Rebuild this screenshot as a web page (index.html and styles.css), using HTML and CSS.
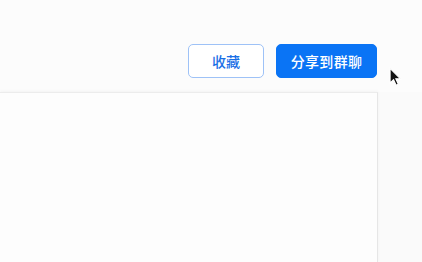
FILE: index.html
```html
<!DOCTYPE html>
<html lang="zh">
<head>
<meta charset="utf-8">
<link rel="stylesheet" href="styles.css">
</head>
<body>
<div class="page">
  <div class="toolbar">
    <button class="btn btn-outline">收藏</button>
    <button class="btn btn-primary">分享到群聊</button>
  </div>
  <div class="card"></div>
  <svg class="cursor" width="13" height="20" viewBox="0 0 12 18">
    <path d="M1 1 L1 14.5 L4.2 11.5 L6.6 16.6 L8.6 15.7 L6.3 10.7 L10.6 10.7 Z" fill="#111" stroke="#fff" stroke-width="1"/>
  </svg>
</div>
</body>
</html>
```

FILE: styles.css
```css
html, body {
  margin: 0;
  padding: 0;
  background: #fafafa;
  font-family: "Noto Sans CJK SC", "Noto Sans", sans-serif;
}
.page {
  position: relative;
  width: 422px;
  height: 262px;
  overflow: hidden;
  display: flex;
  flex-direction: column;
}
.toolbar {
  display: flex;
  justify-content: flex-end;
  gap: 12px;
  padding: 44px 45px 0 0;
  box-sizing: border-box;
  height: 92px;
  background: #fcfcfc;
}
.btn {
  height: 34px;
  border-radius: 5px;
  font-family: inherit;
  font-size: 14px;
  font-weight: 500;
  line-height: 1;
  box-sizing: border-box;
  cursor: pointer;
}
.btn-outline {
  width: 76px;
  background: #ffffff;
  border: 1px solid #9ec2f7;
  color: #1a6fe6;
}
.btn-primary {
  width: 101px;
  background: #0a74f5;
  border: 1px solid #0a74f5;
  color: #ffffff;
  letter-spacing: 0.3px;
}
.card {
  flex: 1;
  width: 378px;
  box-sizing: border-box;
  background: #fdfdfd;
  border-top: 1px solid #ececec;
  border-right: 1px solid #e6e6e6;
  box-shadow: 0 -1px 3px rgba(0,0,0,0.04);
}
.cursor {
  position: absolute;
  left: 389px;
  top: 67px;
}
```
